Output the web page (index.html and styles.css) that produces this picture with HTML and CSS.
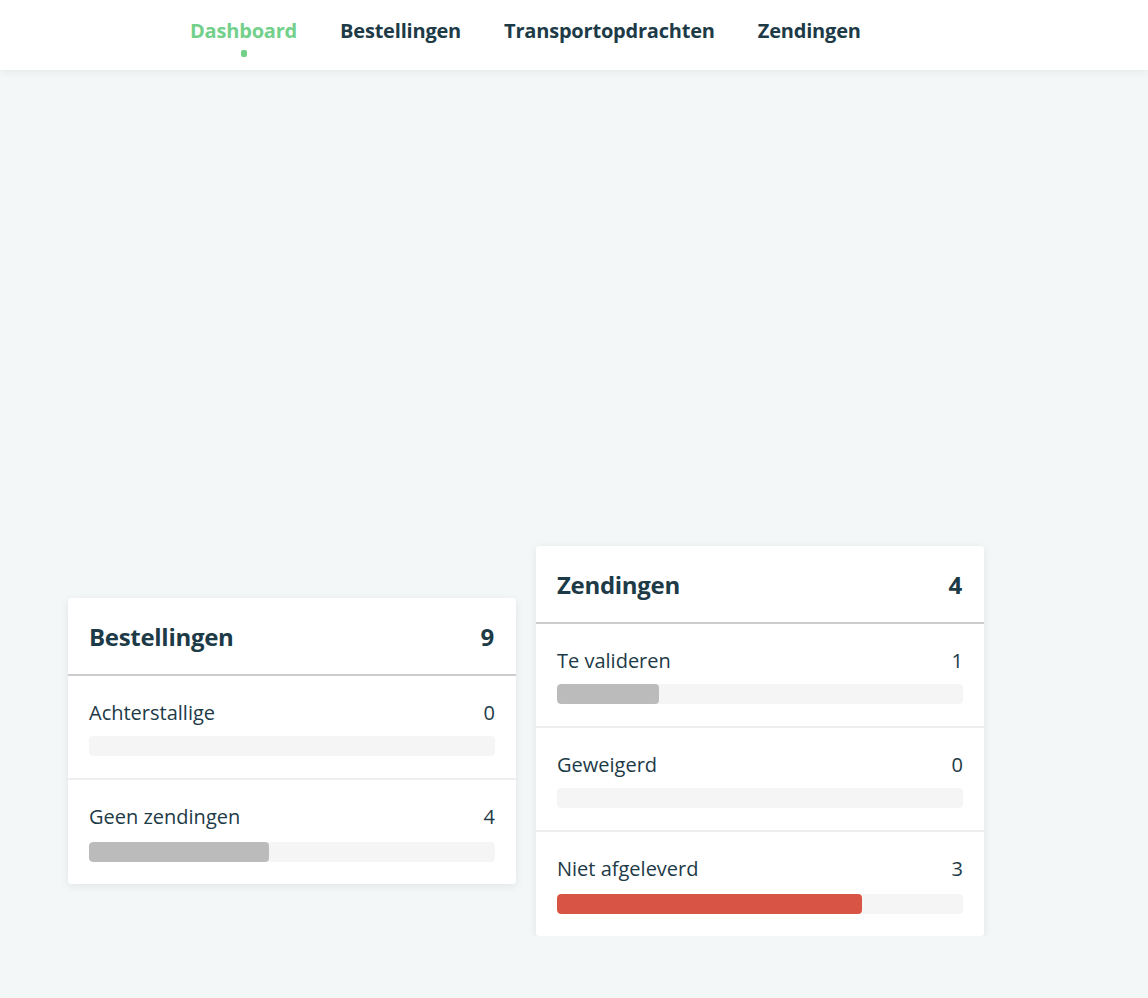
FILE: index.html
```html
<!DOCTYPE html>
<html lang="nl">
<head>
<meta charset="UTF-8">
<meta name="viewport" content="width=device-width, initial-scale=1.0">
<title>Dashboard</title>
<link rel="stylesheet" href="styles.css">
</head>
<body>

<header class="top-bar">
  <nav class="main-nav">
    <a class="nav-item active" href="#">Dashboard</a>
    <a class="nav-item" href="#">Bestellingen</a>
    <a class="nav-item" href="#">Transportopdrachten</a>
    <a class="nav-item" href="#">Zendingen</a>
  </nav>
</header>

<main class="dashboard">
  <div class="chart-area"></div>

  <div class="card-row">
    <div class="stat-card">
      <div class="card-header">
        <span>Bestellingen</span>
        <span>9</span>
      </div>
      <div class="stat-row">
        <div class="stat-line"><span>Achterstallige</span><span>0</span></div>
        <div class="bar"><div class="bar-fill" style="width: 0%"></div></div>
      </div>
      <div class="stat-row">
        <div class="stat-line"><span>Geen zendingen</span><span>4</span></div>
        <div class="bar"><div class="bar-fill" style="width: 44.4%"></div></div>
      </div>
    </div>

    <div class="stat-card">
      <div class="card-header">
        <span>Zendingen</span>
        <span>4</span>
      </div>
      <div class="stat-row">
        <div class="stat-line"><span>Te valideren</span><span>1</span></div>
        <div class="bar"><div class="bar-fill" style="width: 25%"></div></div>
      </div>
      <div class="stat-row">
        <div class="stat-line"><span>Geweigerd</span><span>0</span></div>
        <div class="bar"><div class="bar-fill" style="width: 0%"></div></div>
      </div>
      <div class="stat-row">
        <div class="stat-line"><span>Niet afgeleverd</span><span>3</span></div>
        <div class="bar"><div class="bar-fill danger" style="width: 75%"></div></div>
      </div>
    </div>
  </div>
</main>

</body>
</html>
```

FILE: styles.css
```css
body {
  font-family: 'Open Sans', Lato, sans-serif;
  background-color: #f4f7f8;
  color: #1d3a47;
  margin: 0;
  padding: 0;
}
.top-bar {
  background-color: #fff;
  height: 70px;
  box-shadow: 0 2px 8px rgba(0, 0, 0, 0.06);
  position: relative;
}
.main-nav {
  display: flex;
  gap: 43px;
  padding-left: 190px;
}
.nav-item {
  position: relative;
  display: block;
  line-height: 61px;
  font-size: 20px;
  font-weight: bold;
  letter-spacing: -0.2px;
  color: #1d3a47;
  text-decoration: none;
}
.nav-item.active {
  color: #72d08a;
}
.nav-item.active::after {
  content: '';
  position: absolute;
  left: 50%;
  top: 50px;
  width: 6px;
  height: 7px;
  margin-left: -3px;
  border-radius: 2px;
  background-color: #72d08a;
}
.chart-area {
  height: 476px;
}
.card-row {
  display: flex;
  align-items: center;
  gap: 20px;
  padding-left: 68px;
}
.stat-card {
  width: 448px;
  background-color: #fff;
  border-radius: 3px;
  box-shadow: 0 2px 8px rgba(0, 0, 0, 0.08);
}
.card-header {
  display: flex;
  justify-content: space-between;
  align-items: center;
  height: 76px;
  padding: 0 22px 0 21px;
  border-bottom: 2px solid #cccccc;
  font-size: 24px;
  font-weight: bold;
  letter-spacing: -0.3px;
}
.stat-row {
  padding: 24px 21px 22px 21px;
  border-bottom: 2px solid #eeeeee;
}
.stat-row:last-child {
  border-bottom: none;
  padding-bottom: 22px;
}
.stat-line {
  display: flex;
  justify-content: space-between;
  font-size: 20px;
  line-height: 25px;
  margin-bottom: 11px;
}
.stat-row:last-child .stat-line {
  margin-bottom: 13px;
}
.bar {
  height: 20px;
  border-radius: 4px;
  background-color: #f5f5f5;
  overflow: hidden;
}
.bar-fill {
  height: 100%;
  border-radius: 4px;
  background-color: #bbbbbb;
}
.bar-fill.danger {
  background-color: #d85545;
}
```
